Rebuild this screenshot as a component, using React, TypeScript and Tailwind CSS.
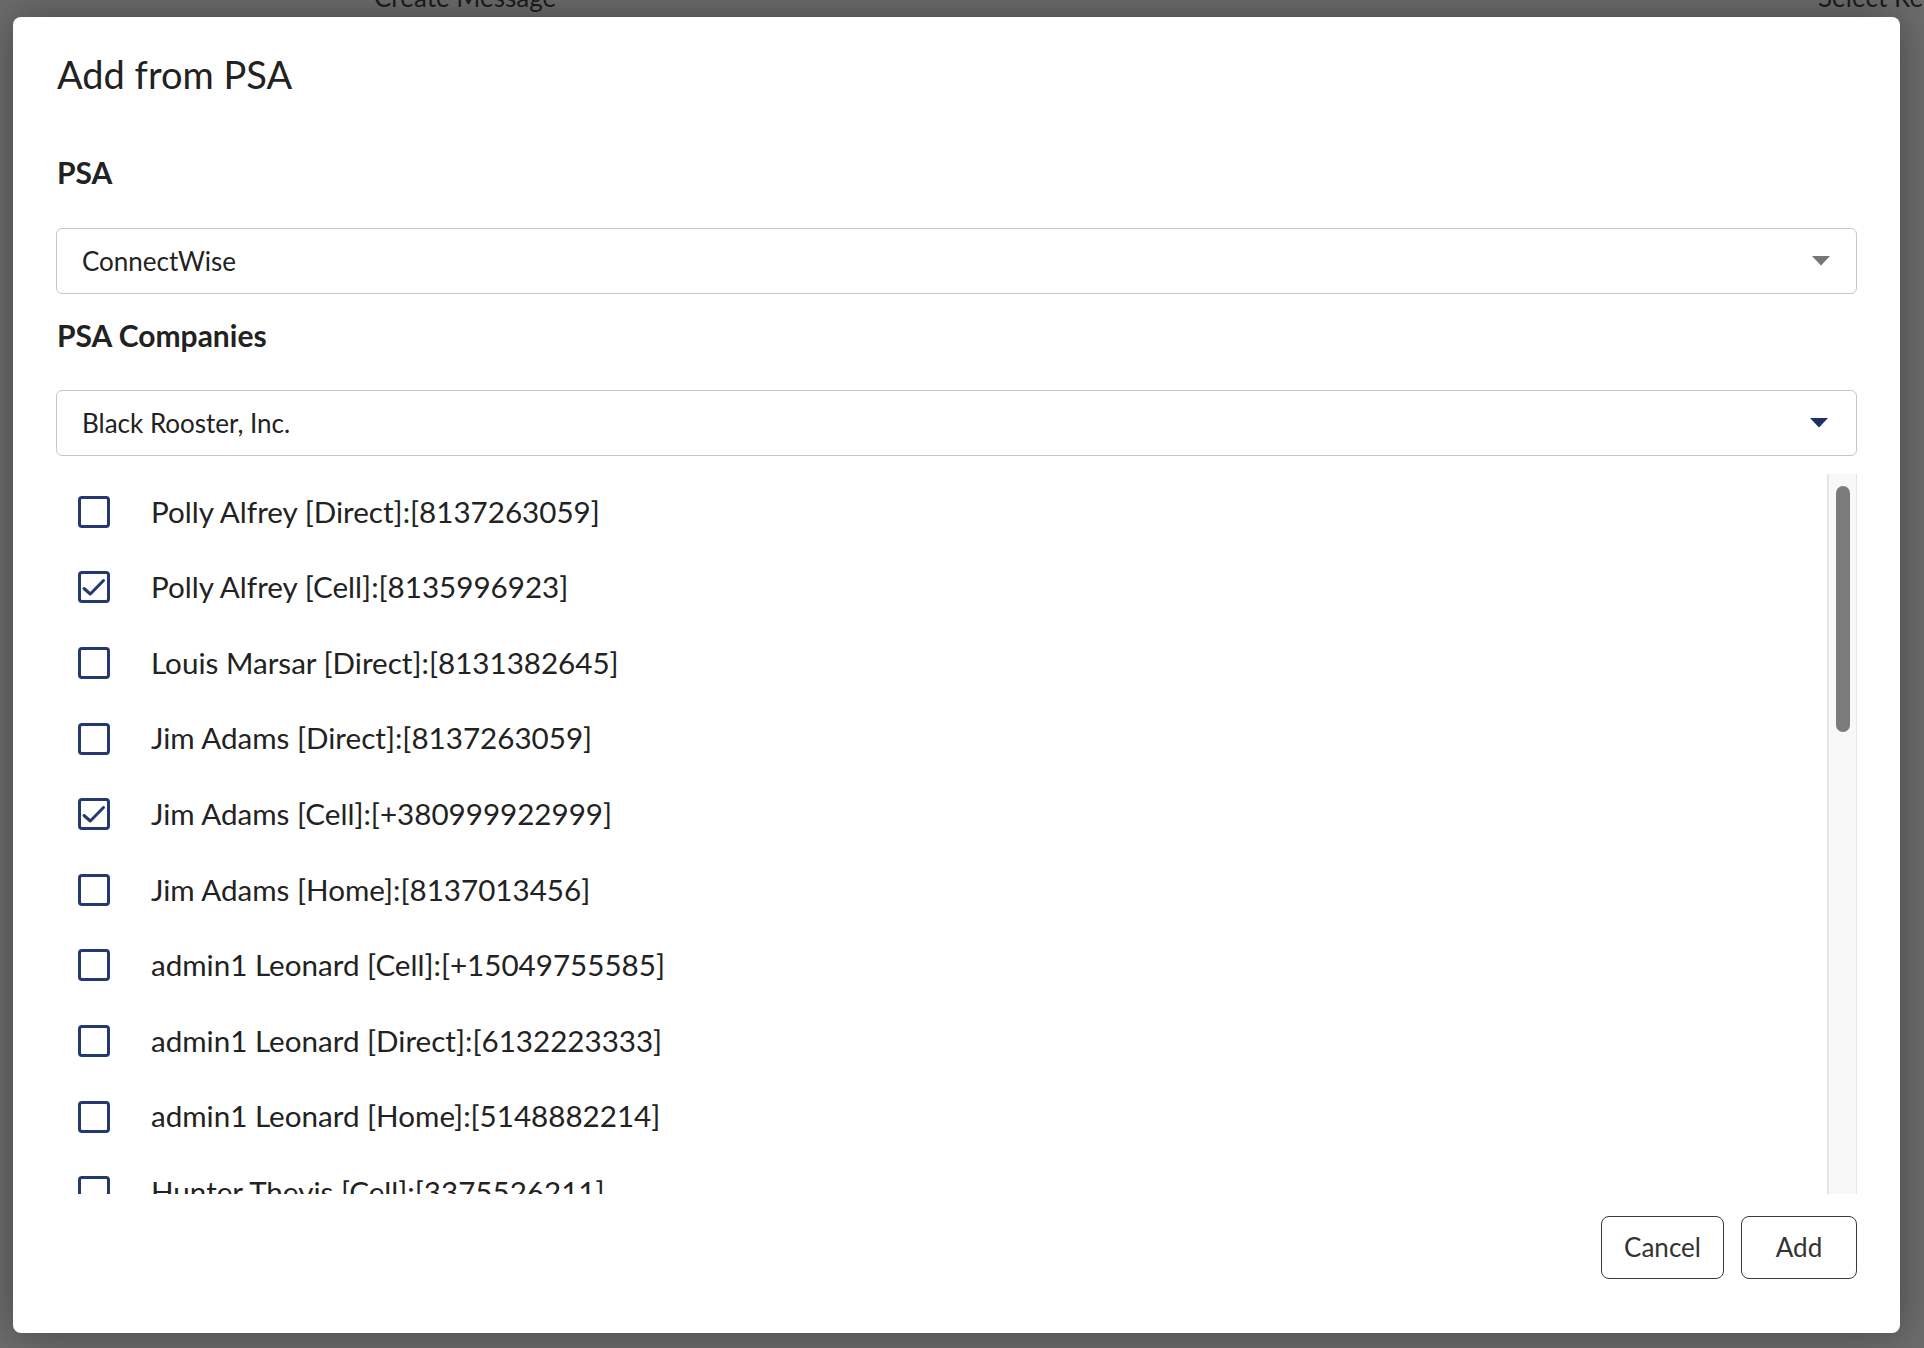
import React from "react";

const rows: [string, boolean][] = [
  ["Polly Alfrey [Direct]:[8137263059]", false],
  ["Polly Alfrey [Cell]:[8135996923]", true],
  ["Louis Marsar [Direct]:[8131382645]", false],
  ["Jim Adams [Direct]:[8137263059]", false],
  ["Jim Adams [Cell]:[+380999922999]", true],
  ["Jim Adams [Home]:[8137013456]", false],
  ["admin1 Leonard [Cell]:[+15049755585]", false],
  ["admin1 Leonard [Direct]:[6132223333]", false],
  ["admin1 Leonard [Home]:[5148882214]", false],
  ["Hunter Thevis [Cell]:[3375526211]", false],
];

function Check({ checked }: { checked: boolean }) {
  return (
    <div className="w-[32px] h-[32px] shrink-0 rounded-[4px] border-[3px] border-[#24396f] bg-white">
      {checked && (
        <svg width="26" height="26" viewBox="0 0 26 26" className="block">
          <path d="M3 14.5 L9.3 20 L22.5 6.5" fill="none" stroke="#24396f" strokeWidth="3" strokeLinecap="round" strokeLinejoin="round" />
        </svg>
      )}
    </div>
  );
}

function Arrow({ color }: { color: string }) {
  return (
    <svg width="18" height="10" viewBox="0 0 18 10">
      <path d="M0 0 L18 0 L9 9.5 Z" fill={color} />
    </svg>
  );
}

export default function App() {
  return (
    <div
      className="relative w-[1924px] h-[1348px] overflow-hidden bg-[#6c6c6c]"
      style={{ fontFamily: "Lato, 'Open Sans', sans-serif" }}
    >
      <div className="absolute left-[374px] top-[-19px] text-[26px] text-[#1c1c1c] leading-[32px]">Create Message</div>
      <div className="absolute left-[1818px] top-[-19px] text-[26px] text-[#1c1c1c] leading-[32px] whitespace-nowrap">Select Recipients</div>

      <div className="absolute left-[13px] top-[17px] w-[1887px] h-[1316px] bg-white rounded-[8px] shadow-[0_0_40px_rgba(0,0,0,0.35)] flex flex-col px-[43px] pt-[35px] text-[#222222]">
        <div className="text-[38px] leading-[44px] h-[44px] pl-[1px]">Add from PSA</div>

        <div className="mt-[56px] text-[30px] font-bold leading-[40px] h-[40px] pl-[1px]">PSA</div>
        <div className="mt-[36px] h-[66px] border border-[#c6c6c6] rounded-[6px] flex items-center justify-between pl-[25px] pr-[26px]">
          <span className="text-[26px] text-[#222]">ConnectWise</span>
          <Arrow color="#767676" />
        </div>

        <div className="mt-[21px] text-[30px] font-bold leading-[40px] h-[40px] pl-[1px]">PSA Companies</div>
        <div className="mt-[35px] h-[66px] border border-[#c6c6c6] rounded-[6px] flex items-center justify-between pl-[25px] pr-[28px]">
          <span className="text-[26px] text-[#222]">Black Rooster, Inc.</span>
          <Arrow color="#1f2f6a" />
        </div>

        <div className="mt-[18px] h-[720px] flex">
          <div className="flex-1 overflow-hidden">
            {rows.map(([label, checked], i) => (
              <div key={i} className="h-[75.6px] flex items-center pl-[22px]">
                <Check checked={checked} />
                <span className="ml-[41px] text-[29.6px] text-[#222] whitespace-nowrap">{label}</span>
              </div>
            ))}
          </div>
          <div className="w-[30px] shrink-0 bg-[#f8f8f8] border-l-2 border-r border-[#e6e6e6] flex justify-center pt-[12px]">
            <div className="w-[14px] h-[246px] rounded-full bg-[#7b7b7b]" />
          </div>
        </div>

        <div className="mt-[22px] flex justify-end gap-[17px]">
          <button className="w-[123px] h-[63px] border-[1.5px] border-[#3a3a3a] rounded-[8px] text-[26px] text-[#333] bg-white">
            Cancel
          </button>
          <button className="w-[116px] h-[63px] border-[1.5px] border-[#3a3a3a] rounded-[8px] text-[26px] text-[#333] bg-white">
            Add
          </button>
        </div>
      </div>
    </div>
  );
}
